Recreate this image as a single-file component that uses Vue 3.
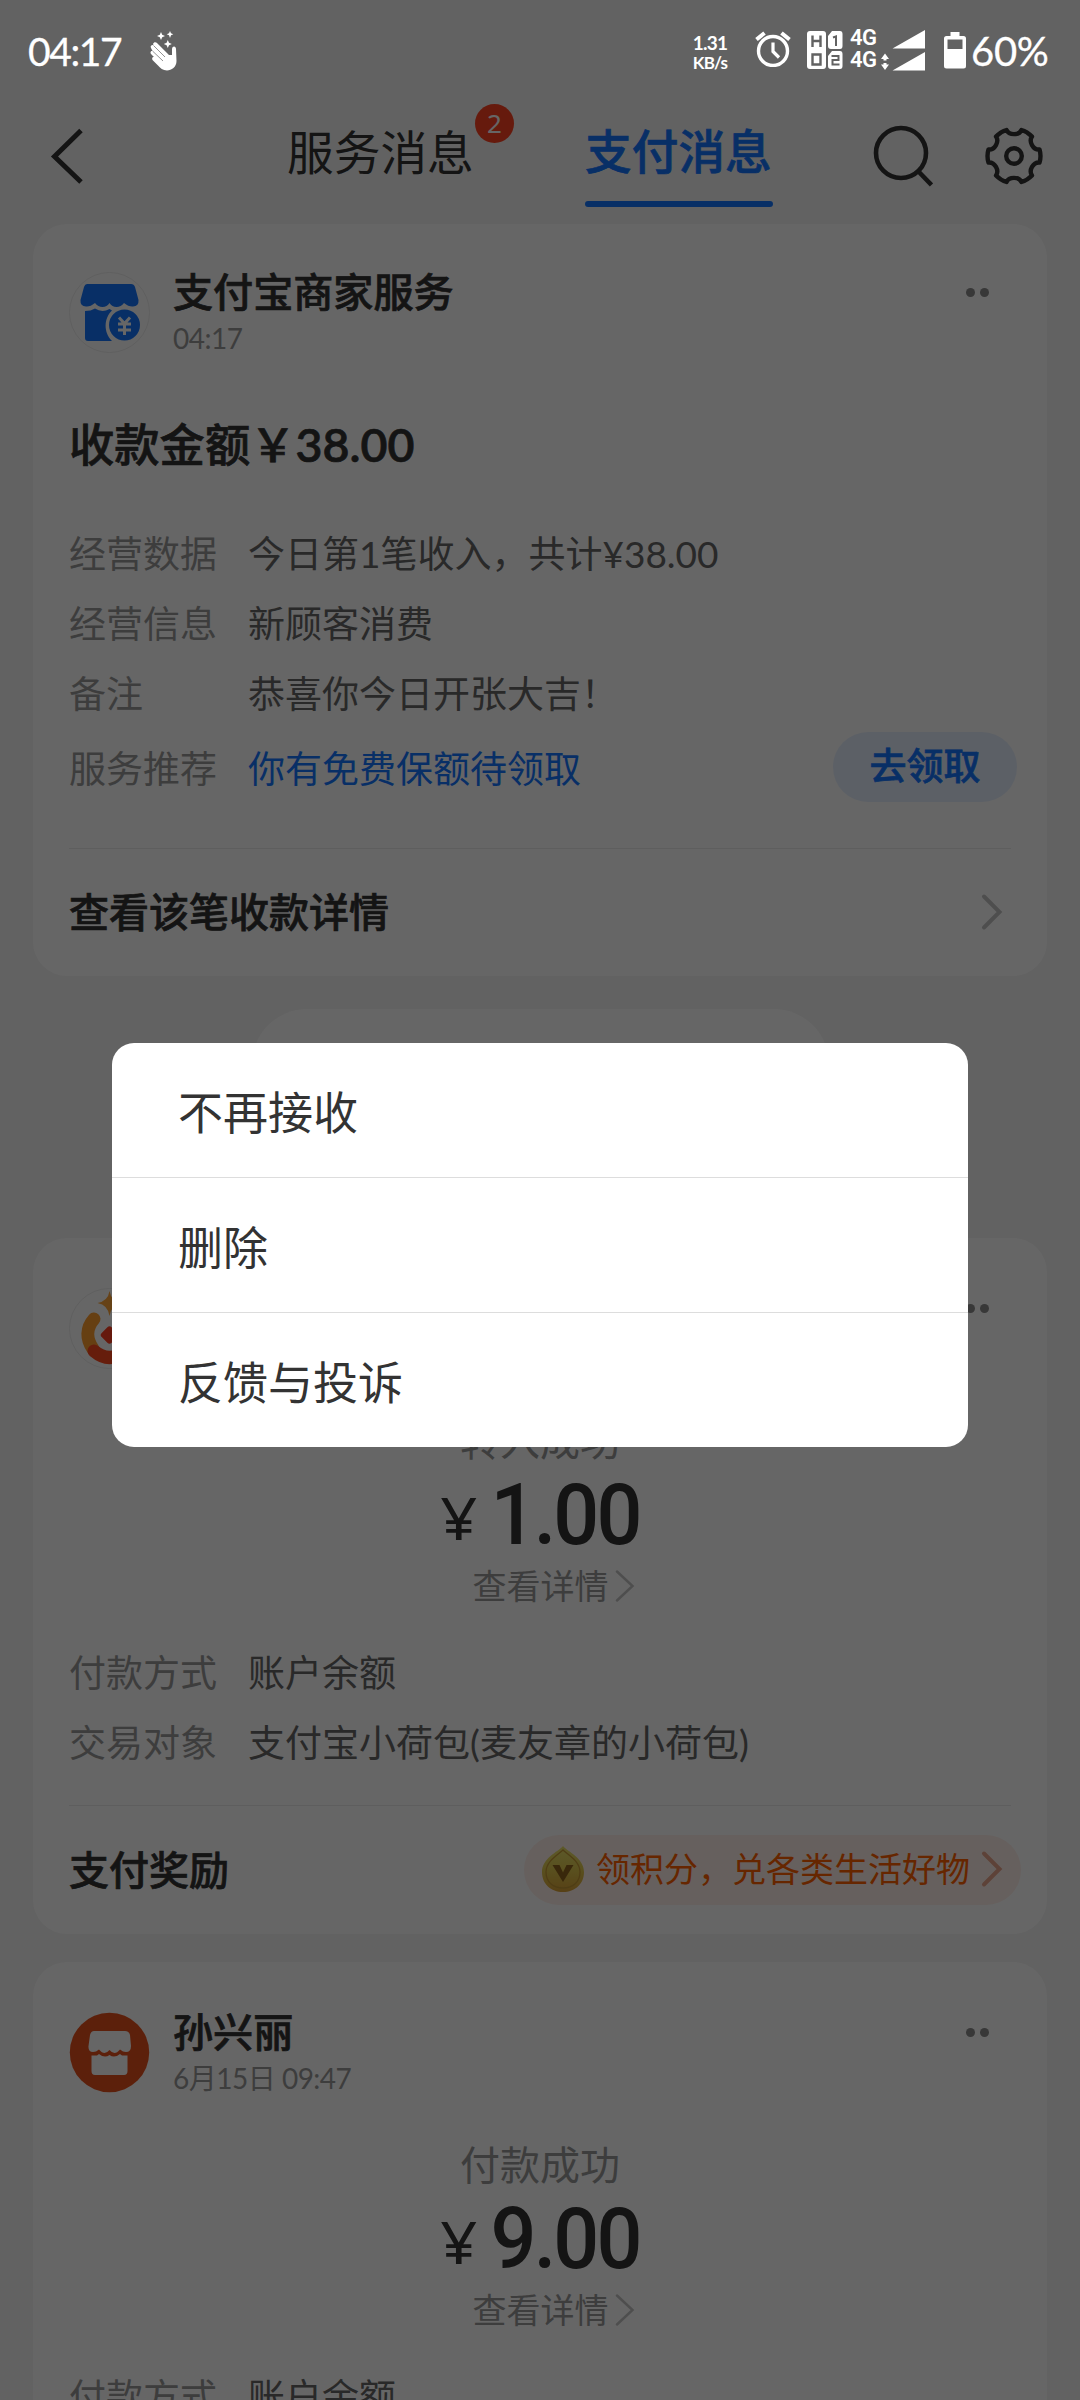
<script setup>
const orders = [
  {
    kind: 'pouch',
    status: '转入成功',
    amount: '1.00',
    rows: [
      ['付款方式', '账户余额'],
      ['交易对象', '支付宝小荷包(麦友章的小荷包)'],
    ],
    reward: '领积分，兑各类生活好物',
  },
  {
    kind: 'store',
    name: '孙兴丽',
    time: '6月15日 09:47',
    status: '付款成功',
    amount: '9.00',
    rows: [['付款方式', '账户余额']],
  },
]
const actions = ['不再接收', '删除', '反馈与投诉']
</script>

<template>
  <div class="screen" lang="zh-CN">
    <div class="statusbar">
      <span class="clock">04:17</span>
      <svg class="hand" width="28" height="40" viewBox="0 0 28 40" fill="#fff">
        <path d="M11 1 l1.2 2.8 2.8 1.2 -2.8 1.2 -1.2 2.8 -1.2 -2.8 -2.8 -1.2 2.8 -1.2z M20 0 l1 2.3 2.3 1 -2.3 1 -1 2.7 -1 -2.7 -2.3 -1 2.3 -1z M17.8 9 l1.2 2.8 2.8 1.2 -2.8 1.2 -1.2 2.8 -1.2 -2.8 -2.8 -1.2 2.8 -1.2z" />
        <path d="M1 17 C0 15 1.5 13.5 3.5 14 L3 13 C4 10.5 6 11 7.5 12.5 L19 24 L22 24 L22 18 C22.3 14.5 26 14.8 26 18 L26.500 30 C26.500 36 21.500 39.500 17 39.500 C13 39.500 10 37 8 34.500 L2.500 29 C1.500 27 2.800 25.500 4 26 L1 23 C-.2 21 1 19.500 2.500 20z" />
        <path d="M3.500 14.500 L15 26 M2.500 20 L13 30" stroke="#777" stroke-width=".8" fill="none" />
      </svg>
      <span class="spacer"></span>
      <span class="speed"><b>1.31</b><i>KB/s</i></span>
      <svg class="alarm" width="36" height="36" viewBox="0 0 36 36" fill="none" stroke="#fff">
        <circle cx="18" cy="20" r="14.500" stroke-width="3.400" />
        <path d="M18 11.500 V20.500 L24 26.500" stroke-width="3.200" />
        <path d="M1.500 8.500 L9.500 2 M26.500 2 L34.500 8.500" stroke-width="4" />
      </svg>
      <svg class="hd" width="36" height="38" viewBox="0 0 36 38">
        <rect x="0" y="0" width="19" height="38" rx="3" fill="#fff" />
        <path d="M25 0 H33 Q35.500 0 35.500 3 V15 Q35.500 18 33 18 H24 Q21 18 21 15 V5z M25 20 H33 Q35.500 20 35.500 23 V35 Q35.500 38 33 38 H24 Q21 38 21 35 V25z" fill="#fff" />
        <g fill="none" stroke="#626262" stroke-width="2.400">
          <path d="M5.500 4.500 V16 M13.500 4.500 V16 M5.500 10 H13.500 M5.500 23.500 H13.500 V33.500 H5.500z" />
          <path d="M26 6.500 L29 5.500 V15 M24.500 25 H31.500 V29 H25.500 V33.500 H32.500" stroke-width="2" />
        </g>
      </svg>
      <span class="net"><b>4G</b><b>4G</b></span>
      <svg class="bars" width="46" height="42" viewBox="0 0 46 42" fill="#fff">
        <path d="M5 24.500 L9 30 H6.500 V31.500 H3.500 V30 H1z M5 41 L9 35.500 H6.500 V34 H3.500 V35.500 H1z" />
        <path d="M45 1 V19.500 H12.500z M45 23 V41.500 H12.500z" />
      </svg>
      <svg class="battery" width="22" height="37" viewBox="0 0 22 37">
        <path d="M6.500 0 H15.500 V4 H19.500 Q22 4 22 6.500 V34 Q22 36.500 19.500 36.500 H2.500 Q0 36.500 0 34 V6.500 Q0 4 2.500 4 H6.500z M3.500 7.500 V17 H18.500 V7.500z" fill="#fff" fill-rule="evenodd" />
      </svg>
      <span class="percent">60%</span>
    </div>

    <div class="navbar">
      <svg class="back" width="34" height="56" viewBox="0 0 34 56" fill="none" stroke="#333" stroke-width="5">
        <path d="M31 2.500 L4.500 28.500 L31 54" />
      </svg>
      <div class="tab">服务消息<span class="badge">2</span></div>
      <div class="tab active">支付消息</div>
      <svg class="search" width="60" height="64" viewBox="0 0 60 64" fill="none" stroke="#333" stroke-width="4.600">
        <circle cx="28" cy="29" r="25" />
        <path d="M45 47 L58.500 61" />
      </svg>
      <svg class="gear" width="58" height="58" viewBox="0 0 58 58" fill="none" stroke="#333" stroke-width="4.400" stroke-linejoin="round">
        <path d="M21.5 3 C24 8.500 34 8.500 36.500 3 Q42 4.500 47 9.500 C43.500 14.500 48 23 54.500 22.500 Q56.500 29 54.500 35.500 C48 35 43.500 43.500 47 48.500 Q42 53.500 36.500 55 C34 49.500 24 49.500 21.500 55 Q16 53.500 11 48.500 C14.500 43.500 10 35 3.500 35.500 Q1.500 29 3.500 22.500 C10 23 14.500 14.500 11 9.500 Q16 4.500 21.500 3z" />
        <circle cx="29" cy="29" r="7.800" />
      </svg>
    </div>

    <main class="feed">
      <section class="card income">
        <header class="head">
          <svg class="avatar" width="81" height="81" viewBox="0 0 81 81">
            <circle cx="40.500" cy="40.500" r="40" fill="#fff" stroke="#eee" />
            <path d="M18 12 H62 Q65 12 66 15 L69.500 28 Q70 34 64 34.500 Q60 35 55 31 Q52 35 47.500 35 Q43 35 40.500 31 Q38 35 33.500 35 Q29 35 26 31 Q21 35 17 34.500 Q11 34 11.500 28 L15 15 Q16 12 18 12z" fill="#1677ff" />
            <path d="M16 39 Q22 39 26 36.500 Q33 41 40.500 37 L43 38.500 C35 46 34 60 43 69 H19 Q16 69 16 66z" fill="#1677ff" />
            <circle cx="55.500" cy="53" r="15.500" fill="#1677ff" />
            <path d="M50 45.500 L55.500 51.500 L61 45.500 M55.500 51 V63 M49 52 H62 M49 58 H62" stroke="#fff" stroke-width="3" fill="none" />
          </svg>
          <div class="who"><h3>支付宝商家服务</h3><p>04:17</p></div>
          <span class="dots"><i></i><i></i></span>
        </header>
        <h2>收款金额￥<span class="sum">38.00</span></h2>
        <div class="rows">
          <div class="row"><label>经营数据</label><span>今日第1笔收入，共计¥38.00</span></div>
          <div class="row"><label>经营信息</label><span>新顾客消费</span></div>
          <div class="row"><label>备注</label><span>恭喜你今日开张大吉！</span></div>
          <div class="row promo"><label>服务推荐</label><span>你有免费保额待领取</span><button>去领取</button></div>
        </div>
        <footer class="foot">
          <strong>查看该笔收款详情</strong>
          <svg class="go" width="22" height="38" viewBox="0 0 22 38" fill="none" stroke="#c4c4c4" stroke-width="4" stroke-linecap="round"><path d="M3 3.500 L18.500 19 L3 34.500" /></svg>
        </footer>
      </section>

      <div class="earlier"></div>

      <section v-for="o in orders" :key="o.kind" class="card order">
        <header class="head">
          <svg v-if="o.kind === 'pouch'" class="avatar" width="81" height="81" viewBox="0 0 81 81">
            <circle cx="40.500" cy="40.500" r="40" fill="#fff" stroke="#eee" />
            <path d="M40.500 3 Q42 13 53 15 Q42 17 40.500 28 Q39 17 28.500 15 Q39 13 40.500 3z" fill="#ffa63a" />
            <path d="M25 31 C17 40 17 51 24 61" stroke="#ff9d2f" stroke-width="13" stroke-linecap="round" fill="none" />
            <path d="M56 31 C64 40 64 51 57 61" stroke="#ff9d2f" stroke-width="13" stroke-linecap="round" fill="none" />
            <path d="M25 63 Q40.500 76 56 63" stroke="#ff4a20" stroke-width="13" stroke-linecap="round" fill="none" />
            <rect x="33.500" y="40" width="14" height="14" rx="3" transform="rotate(45 40.500 47)" fill="#ff4022" />
          </svg>
          <svg v-else class="avatar" width="81" height="81" viewBox="0 0 81 81">
            <circle cx="40.500" cy="40.500" r="39.700" fill="#e7501c" />
            <path d="M25 19 H56 Q60 19 61 23 L62 34 Q62 40 57 40 Q54 40 51 37.500 Q48 41 45.500 41 Q43 41 40.500 38 Q38 41 35.500 41 Q33 41 30 37.500 Q27 40 24 40 Q19 40 19.500 34 L21 23 Q22 19 25 19z" fill="#fff" />
            <path d="M22.500 43.500 H28 L30 42 Q35.500 46.500 40.500 43 Q45.500 46.500 51 42 L53 43.500 H58.500 V59 Q58.500 63 55 63 H26 Q22.500 63 22.500 59z" fill="#fff" />
          </svg>
          <div class="who"><h3>{{ o.name }}</h3><p>{{ o.time }}</p></div>
          <span class="dots"><i></i><i></i></span>
        </header>
        <div class="status">{{ o.status }}</div>
        <div class="amount"><span class="yen">¥</span><span class="num">{{ o.amount }}</span></div>
        <div class="detail">
          <span>查看详情</span>
          <svg width="20" height="32" viewBox="0 0 20 32" fill="none" stroke="#c4c4c4" stroke-width="2.500" stroke-linecap="round"><path d="M2 1.500 L17.500 16 L2 30.500" /></svg>
        </div>
        <div class="rows">
          <div v-for="r in o.rows" :key="r[0]" class="row"><label>{{ r[0] }}</label><span>{{ r[1] }}</span></div>
        </div>
        <footer v-if="o.reward" class="foot">
          <strong>支付奖励</strong>
          <span class="reward">
            <svg width="44" height="48" viewBox="0 0 44 48">
              <defs>
                <linearGradient id="drop" x1="0" y1="0" x2="0" y2="1">
                  <stop offset="0" stop-color="#e8e06b" /><stop offset=".5" stop-color="#dfc94e" /><stop offset="1" stop-color="#d9a036" />
                </linearGradient>
              </defs>
              <path d="M22 1 C27 7 43 13 43 27 C43 39 34 47 22 47 C10 47 1 39 1 27 C1 13 17 7 22 1z" fill="url(#drop)" />
              <path d="M22 5 C27 10 39 16 39 27 C39 37 32 43 22 43 C12 43 5 37 5 27 C5 16 17 10 22 5z" fill="none" stroke="#c59a35" stroke-width="1.300" />
              <path d="M11.500 20 H18.500 L22 27.500 L25.500 20 H32.500 L22 37z" fill="#8f651c" />
            </svg>
            <em>{{ o.reward }}</em>
            <svg class="go" width="22" height="38" viewBox="0 0 22 38" fill="none" stroke="#e9a58c" stroke-width="4" stroke-linecap="round"><path d="M3 3.500 L18.500 19 L3 34.500" /></svg>
          </span>
        </footer>
      </section>
    </main>

    <div class="scrim">
      <div class="dialog">
        <div v-for="a in actions" :key="a" class="action">{{ a }}</div>
      </div>
    </div>
  </div>
</template>

<style>
body {
  margin: 0;
}
</style>

<style scoped>
* {
  box-sizing: border-box;
}
.screen {
  position: relative;
  width: 1080px;
  height: 2400px;
  overflow: hidden;
  background: #f5f5f5;
  color: #333;
  font-family: Lato, "Noto Sans CJK SC", sans-serif;
}
h2, h3, p {
  margin: 0;
  font-weight: 500;
}
h2, h3, button, .foot strong, .tab.active {
  -webkit-text-stroke: 0.7px currentColor;
}
i, em {
  font-style: normal;
}
svg {
  display: block;
  flex: none;
}
.statusbar {
  position: relative;
  z-index: 2;
  display: flex;
  align-items: center;
  height: 102px;
  padding: 0 29px 0 28px;
  color: #fff;
}
.clock, .percent {
  font-size: 39px;
  line-height: 44px;
  letter-spacing: -1.4px;
  -webkit-text-stroke: 0.3px currentColor;
}
.clock {
  width: 94px;
}
.hand {
  margin-left: 28px;
}
.spacer {
  flex: 1;
}
.speed {
  display: flex;
  flex-direction: column;
  align-items: center;
  width: 32px;
  padding-top: 4px;
  font-size: 19px;
  line-height: 20px;
  letter-spacing: -0.8px;
}
.speed i {
  font-size: 17px;
  font-weight: 700;
}
.alarm {
  margin-left: 29px;
  margin-top: -4px;
}
.hd {
  margin-left: 16px;
  margin-top: -2px;
}
.net {
  display: flex;
  flex-direction: column;
  width: 28px;
  margin-left: 7px;
  margin-top: -4px;
  font: 500 22px/22px Roboto, sans-serif;
  letter-spacing: -0.5px;
}
.net b {
  font-weight: 600;
}
.bars {
  margin-left: 2px;
  margin-top: -3px;
}
.battery {
  margin-left: 18px;
  margin-top: -2px;
}
.percent {
  width: 80px;
  margin-left: 5px;
  font-size: 40px;
  letter-spacing: -0.3px;
}
.navbar {
  display: flex;
  height: 106px;
}
.back {
  margin: 26px 0 0 50px;
}
.tab {
  position: relative;
  width: 188px;
  height: 106px;
  margin-left: 203px;
  font-size: 46.700px;
  line-height: 100px;
  white-space: nowrap;
}
.tab.active {
  margin-left: 110px;
  color: #1677ff;
  font-weight: 500;
  line-height: 98px;
}
.tab.active::after {
  content: "";
  display: block;
  height: 6px;
  margin-top: 1px;
  border-radius: 3px;
  background: #1677ff;
}
.badge {
  position: absolute;
  left: 188px;
  top: 2px;
  width: 39px;
  height: 39px;
  border-radius: 50%;
  background: #fe4221;
  color: #fff;
  font: 26px/39px "Noto Sans", sans-serif;
  text-align: center;
}
.search {
  margin: 22px 0 0 100px;
}
.gear {
  margin: 25px 0 0 52px;
}
.feed {
  padding: 16px 33px 0;
}
.card {
  display: flex;
  flex-direction: column;
  padding: 0 36px;
  background: #fff;
  border-radius: 34px;
}
.income {
  height: 752px;
  padding-top: 44px;
}
.order {
  height: 696px;
  margin-bottom: 28px;
  padding-top: 46px;
}
.earlier {
  width: 577px;
  height: 110px;
  margin: 33px auto 119px;
  border-radius: 55px;
  background: #fff;
}
.head {
  display: flex;
  height: 95px;
}
.avatar {
  margin-top: 4px;
}
.who {
  flex: 1;
  margin-left: 23px;
}
.who h3 {
  height: 45px;
  font-size: 40.100px;
  line-height: 47px;
}
.who p {
  color: #999;
  font-size: 28px;
  font-weight: 400;
  line-height: 50px;
  letter-spacing: -0.500px;
}
.dots {
  display: flex;
  gap: 5px;
  margin: 20px 22px 0 0;
}
.dots i {
  width: 9px;
  height: 9px;
  border-radius: 50%;
  background: #8c8c8c;
}
h2 {
  height: 60px;
  margin-top: 50px;
  font-size: 45.300px;
  line-height: 62px;
}
.sum {
  font-weight: 600;
  font-size: 46.500px;
}
.rows {
  font-size: 37px;
  line-height: 70px;
}
.income .rows {
  margin-top: 44px;
}
.row {
  display: flex;
  align-items: center;
  height: 70px;
}
.row label, .row span {
  padding-top: 3px;
}
.row label {
  width: 179px;
  color: #999;
}
.row span {
  flex: 1;
  color: #666;
  white-space: nowrap;
}
.promo {
  margin-top: 5px;
}
.row.promo span {
  color: #1677ff;
}
button {
  width: 184px;
  height: 70px;
  margin-right: -6px;
  padding: 0 0 3px;
  border: 0;
  border-radius: 35px;
  background: #e7f1ff;
  color: #1677ff;
  font: 500 37px/62px Lato, "Noto Sans CJK SC", sans-serif;
}
.foot {
  display: flex;
  flex: 1;
  align-items: center;
  justify-content: space-between;
  padding-bottom: 1px;
  border-top: 1px solid #ececec;
}
.income .foot {
  margin-top: 46px;
}
.income .go {
  margin-right: 8px;
}
.foot strong {
  font-size: 40px;
  font-weight: 500;
  line-height: 46px;
}
.status {
  margin-top: 34px;
  color: #999;
  font-size: 40px;
  line-height: 56px;
  text-align: center;
}
.amount {
  display: flex;
  align-items: baseline;
  justify-content: center;
  height: 90px;
  padding-right: 5px;
  font-family: Roboto, sans-serif;
  line-height: 92px;
}
.yen {
  font-family: "Noto Sans", sans-serif;
  font-size: 59px;
  transform: translate(7px, -4px) scaleX(1.1);
}
.num {
  margin-left: 12px;
  font-size: 86px;
  font-weight: 500;
  letter-spacing: -3px;
  transform: scaleX(0.94);
  transform-origin: right center;
}
.detail {
  display: flex;
  align-items: center;
  justify-content: center;
  gap: 6px;
  height: 54px;
  padding-left: 27px;
  color: #999;
  font-size: 34px;
  line-height: 54px;
}
.order .rows {
  margin-top: 23px;
}
.order .foot {
  margin-top: 29px;
}
.reward {
  display: flex;
  align-items: center;
  width: 497px;
  height: 70px;
  margin-right: -10px;
  padding: 0 0 2px 17px;
  border-radius: 35px;
  background: #fff0ea;
  color: #ff5f00;
  font-size: 34px;
  line-height: 40px;
}
.reward em {
  margin-left: 11px;
}
.reward .go {
  margin-left: 11px;
}
.scrim {
  position: absolute;
  inset: 0;
  z-index: 1;
  background: rgba(0, 0, 0, 0.6);
}
.dialog {
  width: 856px;
  margin: 1043px auto 0;
  overflow: hidden;
  border-radius: 22px;
  background: #fff;
}
.action {
  height: 134px;
  padding: 5px 0 0 66px;
  font-size: 45px;
  line-height: 130px;
}
.action + .action {
  height: 135px;
  border-top: 1px solid #ddd;
}
</style>
